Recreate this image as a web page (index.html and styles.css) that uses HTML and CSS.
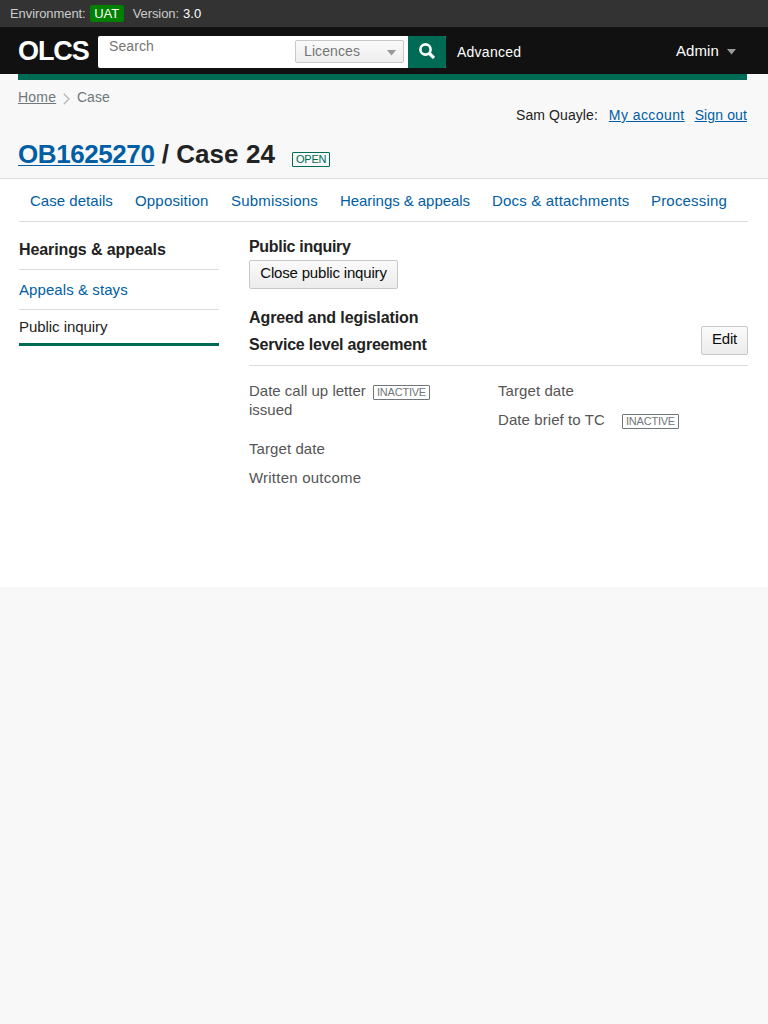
FILE: index.html
```html
<!DOCTYPE html>
<html lang="en">
<head>
<meta charset="utf-8">
<title>OLCS - Case 24</title>
<link rel="stylesheet" href="styles.css">
</head>
<body>
<div class="env"><span>Environment:</span><span class="env-tag">UAT</span><span class="env-label">Version:</span><span class="env-value">3.0</span></div>
<header class="top">
  <a class="logo">OLCS</a>
  <div class="search">
    <span class="search-text">Search</span>
    <div class="select"><span>Licences</span><svg width="9" height="6" viewBox="0 0 9 6"><path d="M0 0h9L4.5 5.5z" fill="#999"/></svg></div>
    <div class="search-button"><svg width="16" height="16" viewBox="0 0 16 16" fill="none" stroke="#fff"><circle cx="6.5" cy="6.5" r="5.1" stroke-width="2.6"/><path d="M10 10l5 5" stroke-width="3.3"/></svg></div>
  </div>
  <a class="advanced">Advanced</a>
  <a class="admin"><span>Admin</span><svg width="9" height="6" viewBox="0 0 9 6"><path d="M0 0h9L4.5 5.5z" fill="#999"/></svg></a>
</header>
<div class="masthead">
  <div class="crumbs"><a class="home">Home</a><svg width="7" height="12" viewBox="0 0 7 12" fill="none" stroke="#b1b5b8" stroke-width="1.3"><path d="M.7.7L6 6 .7 11.3"/></svg><span>Case</span></div>
  <div class="user"><span class="name">Sam Quayle:</span><a class="account">My account</a><a class="signout">Sign out</a></div>
  <div class="title"><h1><a>OB1625270</a> / Case 24</h1><span class="tag tag-open">OPEN</span></div>
</div>
<main class="page">
  <nav class="tabs"><a>Case details</a><a>Opposition</a><a>Submissions</a><a class="tab-hearings">Hearings &amp; appeals</a><a>Docs &amp; attachments</a><a>Processing</a></nav>
  <div class="columns">
    <aside class="side">
      <h2>Hearings &amp; appeals</h2>
      <a class="side-link">Appeals &amp; stays</a>
      <a class="side-current">Public inquiry</a>
    </aside>
    <section class="content">
      <h3>Public inquiry</h3>
      <button class="button">Close public inquiry</button>
      <h3 class="agreed">Agreed and legislation</h3>
      <div class="sla"><h3>Service level agreement</h3><button class="button edit">Edit</button></div>
      <div class="details">
        <dl>
          <div class="row row-tall"><dt>Date call up letter issued</dt><dd><span class="tag">INACTIVE</span></dd></div>
          <div class="row"><dt>Target date</dt></div>
          <div class="row"><dt class="written">Written outcome</dt></div>
        </dl>
        <dl>
          <div class="row"><dt>Target date</dt></div>
          <div class="row"><dt>Date brief to TC</dt><dd><span class="tag">INACTIVE</span></dd></div>
        </dl>
      </div>
    </section>
  </div>
</main>
</body>
</html>
```
FILE: styles.css
```css
* { box-sizing: border-box; }
body { margin: 0; background: #f8f8f8; color: #222; font: 15px/19px "Liberation Sans", Arial, sans-serif; }
h1, h2, h3, dl, dd { margin: 0; }
a { color: #005ea5; }
svg { display: block; flex: none; }
.env { display: flex; align-items: center; height: 27px; padding-left: 10px; background: #333; color: #ccc; font-size: 13px; line-height: 17px; letter-spacing: -.08px; }
.env-tag { margin-left: 4px; width: 34px; text-align: center; background: #008000; color: #fff; border-radius: 2px; }
.env-label { margin-left: 9px; }
.env-value { margin-left: 4px; color: #fff; letter-spacing: .1px; }
.top { display: flex; height: 47px; padding: 9px 32px 0 18px; background: #111; }
.top a { color: #fff; }
.logo { width: 80px; font-size: 27px; font-weight: 700; line-height: 31px; letter-spacing: -1.1px; }
.search { display: flex; width: 348px; height: 32px; padding-left: 11px; background: #fff; border-radius: 2px; overflow: hidden; }
.search-text { width: 186px; font-size: 14px; line-height: 21px; letter-spacing: .1px; color: #757575; }
.select { display: flex; align-items: center; justify-content: space-between; width: 109px; height: 23px; margin-top: 4px; padding: 0 7px 0 8px; border: 1px solid #c8c8c8; border-radius: 2px; background: linear-gradient(#fafafa, #eee); color: #757575; font-size: 14px; letter-spacing: .1px; }
.select svg { margin-top: 3px; }
.search-button { width: 38px; margin-left: 4px; padding: 7px 11px; background: #006b54; }
.advanced { margin-left: 11px; font-size: 14px; line-height: 32px; letter-spacing: .25px; }
.admin { display: flex; margin-left: auto; gap: 8px; line-height: 30px; letter-spacing: .1px; }
.admin svg { margin-top: 13px; }
.masthead { height: 105px; padding: 0 21px 0 18px; border-bottom: 1px solid #dcdcdc; font-size: 14px; }
.masthead::before { content: ""; display: block; height: 6px; background: #006b54; }
.crumbs { display: flex; align-items: center; height: 16px; margin-top: 9px; color: #6f777b; }
.home { width: 38px; letter-spacing: .2px; color: #6f777b; text-decoration: underline; }
.crumbs svg { margin: 3px 7px 0 7px; }
.user { display: flex; justify-content: flex-end; margin-top: 1px; line-height: 19px; }
.user a { text-decoration: underline; }
.name { letter-spacing: .08px; }
.account { margin-left: 11px; letter-spacing: .42px; }
.signout { margin-left: 10px; letter-spacing: .12px; }
.title { display: flex; margin-top: 13px; }
.title h1 { width: 258px; font-size: 26px; line-height: 32px; letter-spacing: .05px; white-space: nowrap; }
.title a { letter-spacing: -.42px; text-decoration: underline; text-decoration-thickness: 1px; text-underline-offset: 2px; }
.tag { display: block; width: 57px; height: 15px; padding: 0 3px; border: 1px solid #6f777b; border-radius: 1px; color: #6f777b; font-size: 11px; line-height: 13px; letter-spacing: -.22px; white-space: nowrap; }
.tag-open { width: 38px; margin: 14px 0 0 16px; border-color: #006b54; color: #006b54; }
.page { height: 408px; padding: 0 20px 0 19px; background: #fff; }
.tabs { display: grid; grid-template-columns: 83px 74px 87px 130px 137px 76px; column-gap: 22px; height: 43px; padding-left: 11px; border-bottom: 1px solid #dcdcdc; line-height: 44px; letter-spacing: .18px; white-space: nowrap; }
.tabs a:first-child { letter-spacing: .03px; }
.tabs .tab-hearings { letter-spacing: -.05px; }
.columns { display: flex; gap: 30px; }
.side { width: 200px; padding-top: 18px; }
.side h2 { height: 30px; font-size: 16px; line-height: 20px; letter-spacing: -.1px; border-bottom: 1px solid #dcdcdc; }
.side a { display: block; }
.side-link { height: 40px; line-height: 40px; letter-spacing: .08px; border-bottom: 1px solid #dcdcdc; }
.side .side-current { height: 36px; line-height: 34px; letter-spacing: -.05px; border-bottom: 3px solid #006b54; color: #222; }
.content { width: 499px; padding-top: 15px; }
.content h3 { font-size: 16px; line-height: 20px; letter-spacing: -.3px; }
.button { display: block; width: 149px; height: 29px; margin: 3px 0 0; padding: 0 0 4px; border: 1px solid #c8c8c8; border-radius: 2px; background: linear-gradient(#fafafa, #ececec); color: #0b0c0c; font: 15px/19px "Liberation Sans", Arial, sans-serif; letter-spacing: -.18px; white-space: nowrap; }
.content .agreed { height: 18px; margin-top: 19px; letter-spacing: -.1px; }
.sla { display: flex; justify-content: space-between; height: 40px; border-bottom: 1px solid #dcdcdc; }
.sla h3 { margin-top: 9px; letter-spacing: -.2px; }
.sla .edit { width: 47px; margin-top: 0; }
.details { display: flex; padding-top: 15px; color: #555; }
.details dl { width: 249px; }
.row { display: flex; height: 29px; letter-spacing: .08px; }
.row-tall { height: 58px; letter-spacing: 0; }
.row dt { width: 124px; flex: none; }
.row .written { letter-spacing: .22px; }
.row .tag { margin-top: 4px; }
```
